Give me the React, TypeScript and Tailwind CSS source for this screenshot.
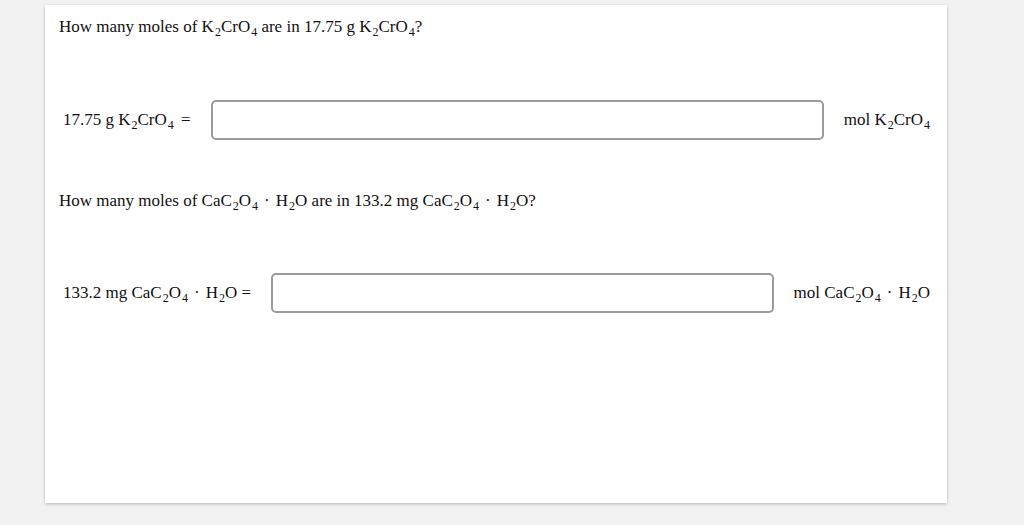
import React from "react";

const serif = { fontFamily: '"Liberation Serif", "Times New Roman", serif' };

function Sub({ children }: { children: React.ReactNode }) {
  return <span className="text-[12px] relative top-[4px] leading-none ml-[1px]">{children}</span>;
}

function Dot() {
  return <span className="mx-[6px]">·</span>;
}

function K2CrO4() {
  return (
    <span>
      K<Sub>2</Sub>CrO<Sub>4</Sub>
    </span>
  );
}

function CaOxalate() {
  return (
    <span>
      CaC<Sub>2</Sub>O<Sub>4</Sub>
      <Dot />H<Sub>2</Sub>O
    </span>
  );
}

function AnswerRow({ label, unit }: { label: React.ReactNode; unit: React.ReactNode }) {
  return (
    <div className="flex items-center pl-[4px] pr-[17px]">
      <div className="whitespace-nowrap">{label}</div>
      <input
        type="text"
        className="flex-1 h-[40px] mx-[20px] rounded-[5px] border-2 border-[#9b9b9b] bg-white outline-none"
      />
      <div className="whitespace-nowrap">{unit}</div>
    </div>
  );
}

export default function App() {
  return (
    <div className="min-h-[525px] w-full bg-[#f2f2f2] pt-[5px]" style={serif}>
      <div className="ml-[45px] w-[902px] h-[498px] bg-white shadow-[0_1px_3px_rgba(0,0,0,0.25)] pl-[14px] pt-[11px] text-[17px] leading-[22px] text-[#111]">
        <p>
          How many moles of <K2CrO4 /> are in 17.75 g <K2CrO4 />?
        </p>

        <div className="mt-[62px]">
          <AnswerRow
            label={
              <>
                17.75 g <K2CrO4 /> <span className="ml-[3px]">=</span>
              </>
            }
            unit={
              <>
                mol <K2CrO4 />
              </>
            }
          />
        </div>

        <p className="mt-[50px]">
          How many moles of <CaOxalate /> are in 133.2 mg <CaOxalate />?
        </p>

        <div className="mt-[61px]">
          <AnswerRow
            label={
              <>
                133.2 mg <CaOxalate /> =
              </>
            }
            unit={
              <>
                mol <CaOxalate />
              </>
            }
          />
        </div>
      </div>
    </div>
  );
}
